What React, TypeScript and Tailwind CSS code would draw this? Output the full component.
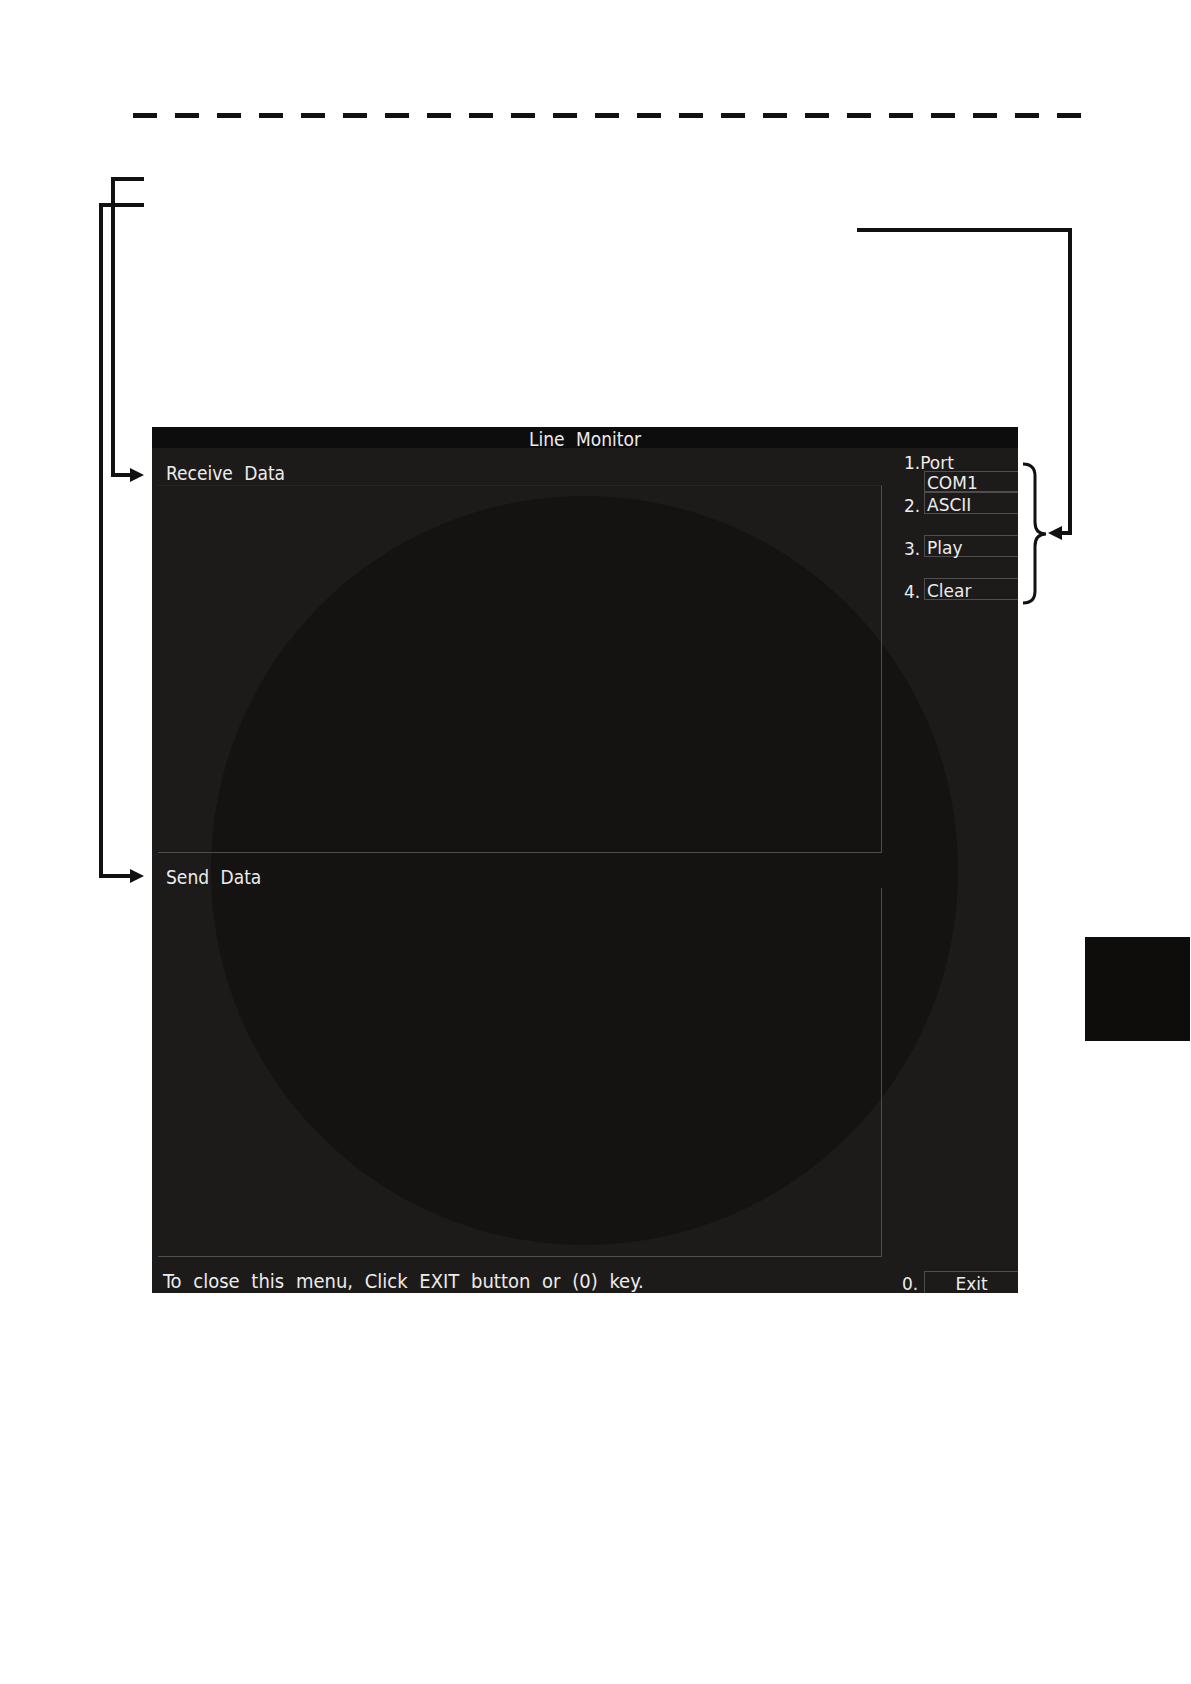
import React from "react";

const labelFont = {
  fontFamily: "'DejaVu Sans Condensed', 'DejaVu Sans', sans-serif",
};

const menuItems = [
  { num: "", text: "COM1" },
  { num: "2.", text: "ASCII" },
];

const MenuBox: React.FC<{ text: string }> = ({ text }) => (
  <div className="flex-1 h-full border-t border-l border-b border-[#4e4e4e] flex items-end pl-[2px] text-[17px] leading-[18px] text-[#ececec]">
    <span className="translate-y-[1px]">{text}</span>
  </div>
);

const MenuRow: React.FC<{ num: string; text: string; h: string }> = ({ num, text, h }) => (
  <div className={`flex ${h}`}>
    <div className="w-[42px] pl-[22px] flex items-end text-[17px] leading-[18px] text-[#ececec]">
      <span className="translate-y-[1px]">{num}</span>
    </div>
    <MenuBox text={text} />
  </div>
);

export default function App() {
  return (
    <div className="relative w-[1191px] h-[1684px] bg-white overflow-hidden" style={labelFont}>
      {/* dashed rule */}
      <div className="flex gap-[18px] pt-[113px] pl-[133px]">
        {Array.from({ length: 23 }).map((_, i) => (
          <div key={i} className="w-[24px] h-[5px] bg-[#111]" />
        ))}
      </div>

      <div className="flex items-start mt-[309px]">
        {/* Line Monitor window */}
        <div className="relative ml-[152px] w-[866px] h-[866px] bg-[#1c1b1a] flex flex-col overflow-hidden">
          <div className="absolute left-[59px] top-[69px] w-[747px] h-[749px] rounded-full bg-[#141312]" />

          <div className="relative h-[21px] bg-[#0e0d0d] flex items-center justify-center pt-[4px] text-[19px] leading-[21px] text-[#ececec] [word-spacing:6px]">
            Line Monitor
          </div>

          <div className="relative flex flex-1">
            <div className="w-[730px] pl-[6px]">
              <div className="h-[37px] pt-[14px] pl-[8px] text-[19px] leading-[22px] text-[#ececec] [word-spacing:6px]">
                Receive Data
              </div>
              <div className="h-[368px] border-r border-b border-t border-t-[#262525] border-[#4e4e4e]" />
              <div className="h-[35px] pt-[13px] pl-[8px] text-[19px] leading-[22px] text-[#ececec] [word-spacing:6px]">
                Send Data
              </div>
              <div className="h-[369px] border-r border-b border-[#4e4e4e]" />
            </div>

            <div className="flex-1" style={{ fontFamily: "'DejaVu Sans', sans-serif" }}>
              <div className="h-[23px] pl-[22px] pt-[6px] text-[17px] leading-[18px] text-[#ececec]">
                1.Port
              </div>
              {menuItems.map((m, i) => (
                <MenuRow key={i} num={m.num} text={m.text} h={i === 0 ? "h-[21px]" : "h-[22px]"} />
              ))}
              <div className="h-[21px]" />
              <MenuRow num="3." text="Play" h="h-[22px]" />
              <div className="h-[21px]" />
              <MenuRow num="4." text="Clear" h="h-[22px]" />
            </div>
          </div>

          <div className="relative h-[36px] flex items-end">
            <div className="flex-1 pl-[11px] text-[20px] leading-[24px] text-[#ececec] [word-spacing:6px]">
              To close this menu, Click EXIT button or (0) key.
            </div>
            <div className="flex w-[136px] h-[22px]" style={{ fontFamily: "'DejaVu Sans', sans-serif" }}>
              <div className="w-[42px] pl-[20px] flex items-end text-[17px] leading-[18px] text-[#ececec]">
                0.
              </div>
              <div className="flex-1 border-t border-l border-[#4e4e4e] flex items-end justify-center text-[17px] leading-[18px] text-[#ececec]">
                Exit
              </div>
            </div>
          </div>
        </div>

        {/* chapter tab */}
        <div className="ml-[67px] mt-[510px] w-[105px] h-[104px] bg-[#0f0d0c]" />
      </div>

      {/* callout lines */}
      <svg className="absolute inset-0 pointer-events-none" width="1191" height="1684" viewBox="0 0 1191 1684">
        <g fill="none" stroke="#111" strokeWidth="4">
          <path d="M144 179 H113 V475 H132" />
          <path d="M144 205 H101 V876 H132" />
          <path d="M857 230 H1070 V533 H1060" />
        </g>
        <g fill="#111">
          <polygon points="130,468 144,475 130,482" />
          <polygon points="130,869 144,876 130,883" />
          <polygon points="1062,526 1048,533 1062,540" />
        </g>
        <path
          d="M1023 464 Q1035 464 1035 476 V522 Q1035 534 1046 534 Q1035 534 1035 546 V591 Q1035 603 1023 603"
          fill="none"
          stroke="#111"
          strokeWidth="3"
        />
      </svg>
    </div>
  );
}
